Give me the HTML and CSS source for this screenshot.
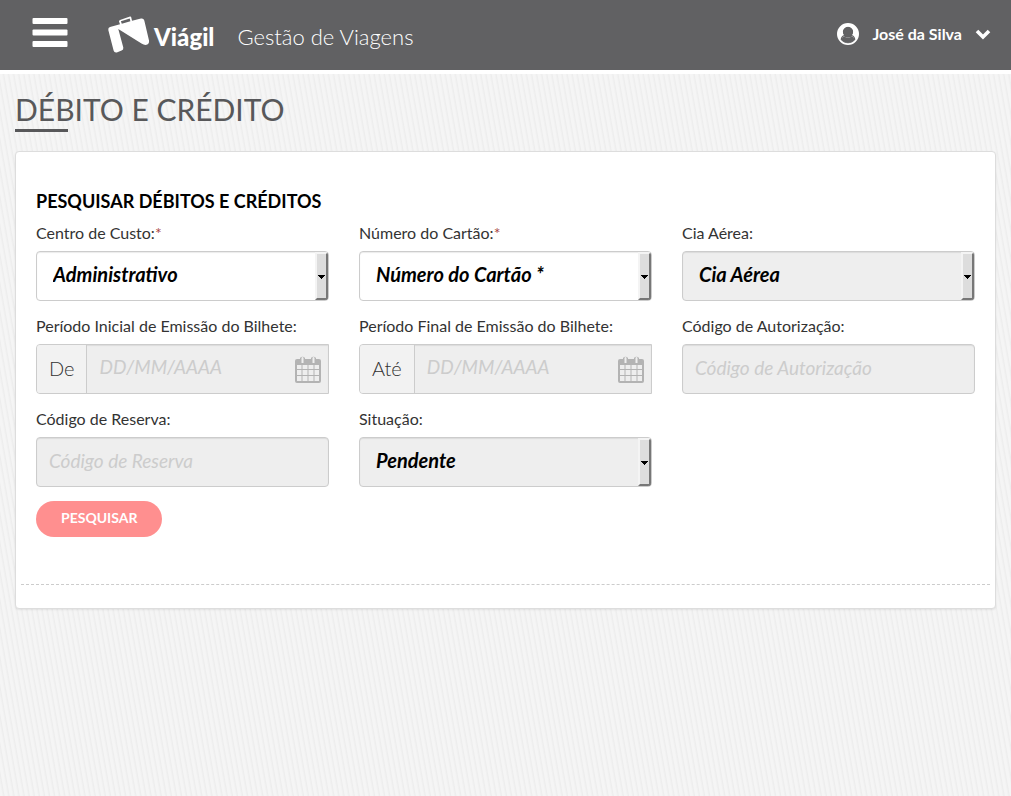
FILE: index.html
```html
<!DOCTYPE html>
<html lang="pt-BR">
<head>
<meta charset="utf-8">
<meta name="viewport" content="width=device-width, initial-scale=1">
<title>Viágil - Débito e Crédito</title>
<link rel="stylesheet" href="styles.css">
</head>
<body>
<svg class="sprite" aria-hidden="true">
  <symbol id="calendar" viewBox="0 0 26 28">
    <path fill="currentColor" fill-rule="evenodd" d="M2 4h3V3a3 3 0 0 1 5 0v1h6V3a3 3 0 0 1 5 0v1h3a2 2 0 0 1 2 2v20a2 2 0 0 1-2 2H2a2 2 0 0 1-2-2V6a2 2 0 0 1 2-2zM6.500 3v5h2V3a1 1 0 0 0-2 0zM17.500 3v5h2V3a1 1 0 0 0-2 0zM2 10v4h4.500v-4zM7.500 10v4h5v-4zM13.500 10v4h5v-4zM19.500 10v4H24v-4zM2 15v5h4.500v-5zM7.500 15v5h5v-5zM13.500 15v5h5v-5zM19.500 15v5H24v-5zM2 21v5h4.500v-5zM7.500 21v5h5v-5zM13.500 21v5h5v-5zM19.500 21v5H24v-5z"/>
  </symbol>
</svg>
<header class="topbar">
  <button class="menu" type="button" aria-label="Menu">
    <svg width="36" height="30" viewBox="0 0 36 30" fill="#fff"><rect width="35" height="6" rx="1" x=".5"/><rect width="35" height="6" rx="1" x=".5" y="11.500"/><rect width="35" height="6" rx="1" x=".5" y="23"/></svg>
  </button>
  <a class="brand" href="#">
    <svg width="42" height="38" viewBox="0 0 42 38" fill="#fff" aria-hidden="true">
      <path d="M2 11 12 8.300 11 5.500Q10.800 4.500 12 4L22 .6Q23 .4 23.300 1.500L24 4.800 33 2.500Q35.600 2 36.300 4.500L41 24.500Q41.500 28 38.500 28.800Q36.300 29.300 33.500 27.600L10.300 12.900 15.300 31.600Q15.700 34 13.600 34.600L8.800 36.500Q6.200 37 5.600 34.500L.3 14Q0 11.600 2 11zM13.800 7.700 22.400 5.300 21.700 2.500 12.900 5.300z" fill-rule="evenodd"/>
    </svg>
    <span class="brand-name">Viágil</span>
  </a>
  <span class="tagline">Gestão de Viagens</span>
  <button class="user" type="button">
    <svg width="22" height="22" viewBox="0 0 22 22" aria-hidden="true"><path fill="#fff" fill-rule="evenodd" d="M11 0a11 11 0 1 1 0 22 11 11 0 0 1 0-22zM3.600 16.500C4.100 13.900 5.300 12.400 7.200 12A4.900 4.900 0 1 1 14.800 12C16.700 12.400 17.900 13.900 18.400 16.500A9.200 9.200 0 0 1 3.600 16.500zM7 13.200C5.800 13.600 5.100 14.800 4.800 16.600A8 8 0 0 0 17.200 16.600C16.900 14.800 16.200 13.600 15 13.200A5.900 5.900 0 0 1 7 13.200z"/><path fill="#616163" d="M11 4a5 5 0 1 1 0 10 5 5 0 0 1 0-10zM7.200 13.300Q11 16.500 14.800 13.300Q17 14 17.500 16.800Q15 19.800 11 19.900Q7 19.800 4.500 16.800Q5 14 7.200 13.300z"/></svg>
    <span>José da Silva</span>
    <svg class="chevron" width="16" height="12" viewBox="0 0 16 12" aria-hidden="true"><path d="M2 3 8 9l6-6" fill="none" stroke="#fff" stroke-width="3.600"/></svg>
  </button>
</header>
<main class="page">
  <h1 class="title">DÉBITO E CRÉDITO</h1>
  <section class="card">
    <form class="search">
      <h2 class="subtitle">PESQUISAR DÉBITOS E CRÉDITOS</h2>
      <div class="grid">
        <div class="field">
          <label for="centro">Centro de Custo:<span class="required">*</span></label>
          <div class="select"><select id="centro"><option>Administrativo</option></select></div>
        </div>
        <div class="field">
          <label for="cartao">Número do Cartão:<span class="required">*</span></label>
          <div class="select"><select id="cartao"><option>Número do Cartão *</option></select></div>
        </div>
        <div class="field">
          <label for="cia">Cia Aérea:</label>
          <div class="select muted"><select id="cia"><option>Cia Aérea</option></select></div>
        </div>
        <div class="field">
          <label for="inicio">Período Inicial de Emissão do Bilhete:</label>
          <div class="date"><span class="prefix">De</span><input id="inicio" type="text" placeholder="DD/MM/AAAA"><svg class="calendar" aria-hidden="true"><use href="#calendar"/></svg></div>
        </div>
        <div class="field">
          <label for="fim">Período Final de Emissão do Bilhete:</label>
          <div class="date"><span class="prefix">Até</span><input id="fim" type="text" placeholder="DD/MM/AAAA"><svg class="calendar" aria-hidden="true"><use href="#calendar"/></svg></div>
        </div>
        <div class="field">
          <label for="autorizacao">Código de Autorização:</label>
          <input class="text" id="autorizacao" type="text" placeholder="Código de Autorização">
        </div>
        <div class="field">
          <label for="reserva">Código de Reserva:</label>
          <input class="text" id="reserva" type="text" placeholder="Código de Reserva">
        </div>
        <div class="field">
          <label for="situacao">Situação:</label>
          <div class="select muted"><select id="situacao"><option>Pendente</option></select></div>
        </div>
      </div>
      <button class="submit" type="submit">PESQUISAR</button>
    </form>
    <hr class="divider">
  </section>
</main>
</body>
</html>
```
FILE: styles.css
```css
*,
*::before,
*::after {
  box-sizing: border-box;
}

body {
  margin: 0;
  min-height: 100vh;
  font-family: Lato, "Liberation Sans", sans-serif;
  font-size: 16px;
  line-height: 20px;
  color: #333;
  background: repeating-linear-gradient(80deg, #f5f5f5 0, #f5f5f5 2px, #ededed 4px, #f5f5f5 5px);
}

button,
input,
select {
  font: inherit;
}

.sprite {
  position: absolute;
  width: 0;
  height: 0;
}

.topbar {
  display: flex;
  align-items: center;
  height: 74px;
  padding: 0 20px 0 32px;
  color: #fff;
  background: #616163;
  border-bottom: 4px solid #fff;
}

.menu,
.user {
  display: flex;
  align-items: center;
  padding: 0;
  color: inherit;
  background: none;
  border: 0;
  cursor: pointer;
}

.menu {
  padding-bottom: 4px;
}

.brand {
  display: flex;
  align-items: center;
  gap: 4px;
  margin-left: 40px;
  color: inherit;
  text-decoration: none;
}

.brand-name {
  padding-top: 4px;
  font-size: 24px;
  font-weight: 900;
  line-height: 32px;
}

.tagline {
  margin-left: 23px;
  padding-top: 4px;
  font-size: 22px;
  font-weight: 300;
  line-height: 28px;
}

.user {
  gap: 13px;
  margin-left: auto;
  padding-bottom: 2px;
  font-weight: 700;
}

.page {
  padding: 15px;
}

.title {
  margin: 0 0 19px;
  font-size: 30px;
  font-weight: 400;
  line-height: 40px;
  color: #58585a;
}

.title::after {
  content: "";
  display: block;
  width: 53px;
  height: 3px;
  background: #58585a;
}

.card {
  padding: 39px 5px 23px;
  background: #fff;
  border: 1px solid #ddd;
  border-radius: 4px;
  box-shadow: 0 1px 2px rgba(0, 0, 0, 0.08);
}

.search {
  padding: 0 15px;
}

.subtitle {
  margin: 0 0 12px;
  font-size: 18px;
  font-weight: 700;
  line-height: 20px;
  color: #000;
}

.grid {
  display: grid;
  grid-template-columns: repeat(3, minmax(0, 1fr));
  gap: 15px 30px;
}

.field label {
  display: block;
  margin-bottom: 8px;
}

.required {
  color: #a94442;
}

.select,
.text,
.date {
  width: 100%;
  height: 50px;
  border: 1px solid #ccc;
  border-radius: 4px;
  box-shadow: inset 0 1px 1px rgba(0, 0, 0, 0.08);
}

.select {
  display: flex;
  overflow: hidden;
  background: #fff;
}

.select select {
  flex: 1;
  min-width: 0;
  padding: 0 16px 4px;
  font-size: 20px;
  font-style: italic;
  font-weight: 700;
  color: #000;
  background: transparent;
  border: 0;
  appearance: none;
}

.select::after {
  content: "";
  width: 13px;
  border: 2px solid;
  border-color: #f4f4f4 #777 #777 #f4f4f4;
  background: linear-gradient(#000, #000) center 21px / 7px 1px no-repeat, linear-gradient(#000, #000) center 22px / 5px 1px no-repeat, linear-gradient(#000, #000) center 23px / 3px 1px no-repeat, linear-gradient(#000, #000) center 24px / 1px 1px no-repeat, #ddd;
}

.select.muted,
.text,
.date {
  background: #eee;
}

.text {
  padding: 0 12px 4px;
}

.text,
.date input {
  font-size: 19px;
  font-style: italic;
}

.date {
  display: flex;
  align-items: stretch;
  border-radius: 4px 0 0 4px;
}

.prefix {
  display: flex;
  align-items: center;
  padding: 0 12px 2px;
  font-size: 20px;
  font-weight: 300;
  background: #f2f2f2;
  border-right: 1px solid #ccc;
  border-radius: 3px 0 0 3px;
}

.date input {
  flex: 1;
  min-width: 0;
  padding: 0 12px 4px;
  background: transparent;
  border: 0;
}

input::placeholder {
  color: #ccc;
  opacity: 1;
}

.calendar {
  align-self: center;
  width: 26px;
  height: 28px;
  margin-right: 7px;
  color: #b3b3b3;
}

.submit {
  display: block;
  height: 36px;
  margin-top: 14px;
  padding: 0 25px 2px;
  font-size: 14px;
  font-weight: 700;
  color: #fff;
  background: #ff8f8f;
  border: 0;
  border-radius: 18px;
  cursor: pointer;
}

.divider {
  margin: 47px 0 0;
  border: 0;
  border-top: 1px dashed #ccc;
}
```
